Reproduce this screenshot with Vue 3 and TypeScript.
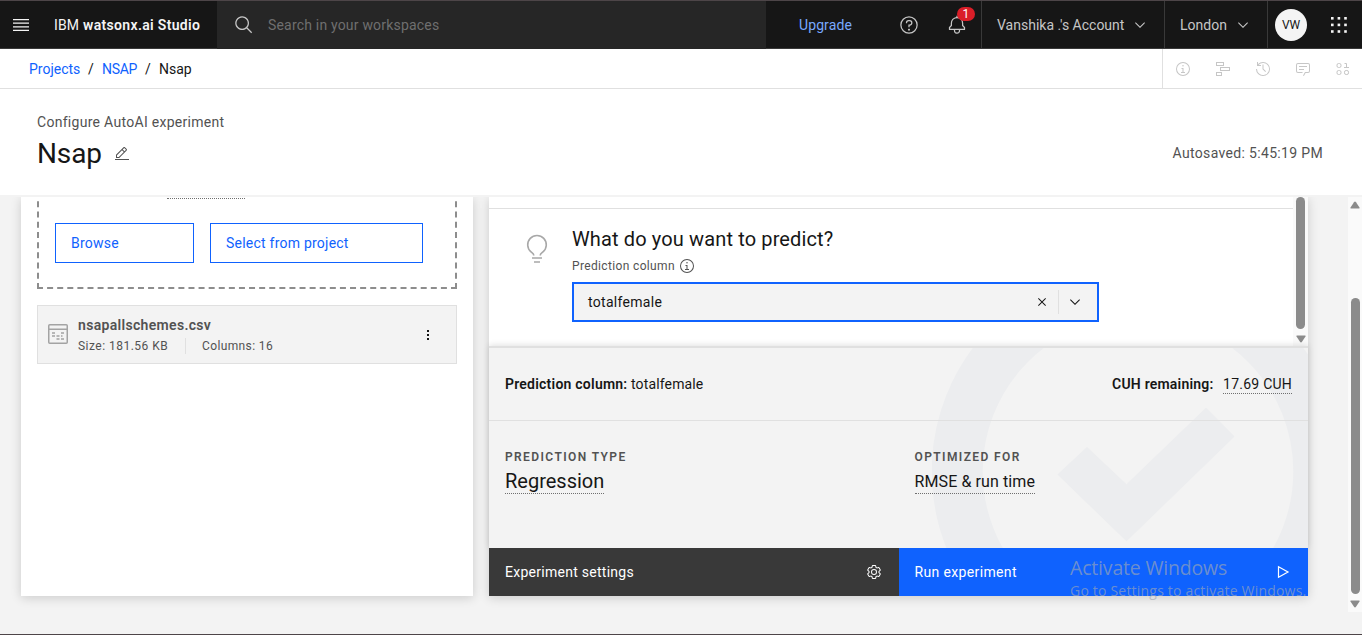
<script setup lang="ts">
import { ref } from 'vue'

const icons = {
  menu: 'M2 14.8H18V16H2z M2 11.2H18V12.4H2z M2 7.6H18V8.8H2z M2 4H18V5.2H2z',
  search:
    'M29,27.5859l-7.5521-7.5521a11.0177,11.0177,0,1,0-1.4141,1.4141L27.5859,29ZM4,13a9,9,0,1,1,9,9A9.01,9.01,0,0,1,4,13Z',
  help: 'M16,2A14,14,0,1,0,30,16,14,14,0,0,0,16,2Zm0,26A12,12,0,1,1,28,16,12,12,0,0,1,16,28Z M16 22a1.5 1.5 0 1 0 .01 0Z M17,8H15.5A4.49,4.49,0,0,0,11,12.5V13h2v-.5A2.5,2.5,0,0,1,15.5,10H17a2.5,2.5,0,0,1,0,5H15v4.5h2V17a4.5,4.5,0,0,0,0-9Z',
  bell: 'M28.7071,19.293,26,16.5859V13a10.0136,10.0136,0,0,0-9-9.9492V1H15V3.0508A10.0136,10.0136,0,0,0,6,13v3.5859L3.2929,19.293A1,1,0,0,0,3,20v3a1,1,0,0,0,1,1h7v.7768a5.152,5.152,0,0,0,4.5,5.1987A5.0057,5.0057,0,0,0,21,25V24h7a1,1,0,0,0,1-1V20A1,1,0,0,0,28.7071,19.293ZM19,25a3,3,0,0,1-6,0V24h6Zm8-3H5V20.4141L7.707,17.707A1,1,0,0,0,8,17V13a8,8,0,0,1,16,0v4a1,1,0,0,0,.293.707L27,20.4141Z',
  chevron: 'M8 11L3 6 3.7 5.3 8 9.6 12.3 5.3 13 6z',
  info: 'M17 22L17 14 13 14 13 16 15 16 15 22 12 22 12 24 20 24 20 22 17 22z M16 8a1.5 1.5 0 1 0 1.5 1.5A1.5 1.5 0 0 0 16 8z M16,30A14,14,0,1,1,30,16,14,14,0,0,1,16,30ZM16,4A12,12,0,1,0,28,16,12,12,0,0,0,16,4Z',
  history:
    'M20.59 22L15 16.41 15 7 17 7 17 15.58 22 20.59 20.59 22z M16,2A13.94,13.94,0,0,0,6,6.23V2H4v8h8V8H7.08A12,12,0,1,1,4,16H2A14,14,0,1,0,16,2Z',
  chat: 'M17.74,30,16,29l4-7h6a2,2,0,0,0,2-2V8a2,2,0,0,0-2-2H6A2,2,0,0,0,4,8V20a2,2,0,0,0,2,2h9v2H6a4,4,0,0,1-4-4V8A4,4,0,0,1,6,4H26a4,4,0,0,1,4,4V20a4,4,0,0,1-4,4H21.16Z M8 10H24V12H8z M8 16H18V18H8z',
  edit: 'M2 26H30V28H2z M25.4,9c0.8-0.8,0.8-2,0-2.8l-3.6-3.6c-0.8-0.8-2-0.8-2.8,0l-15,15V24h6.4L25.4,9zM20.4,4L24,7.6l-3,3L17.4,7L20.4,4z M6,22v-3.6l10-10l3.6,3.6l-10,10H6z',
  close:
    'M24 9.4L22.6 8 16 14.6 9.4 8 8 9.4 14.6 16 8 22.6 9.4 24 16 17.4 22.6 24 24 22.6 17.4 16 24 9.4z',
  settings:
    'M27,16.76c0-.25,0-.5,0-.76s0-.51,0-.77l1.92-1.68A2,2,0,0,0,29.3,11L26.94,7a2,2,0,0,0-1.73-1,2,2,0,0,0-.64.1l-2.43.82a11.35,11.35,0,0,0-1.31-.75l-.51-2.52a2,2,0,0,0-2-1.61H13.64a2,2,0,0,0-2,1.61l-.51,2.52a11.48,11.48,0,0,0-1.32.75L7.43,6.06A2,2,0,0,0,6.79,6,2,2,0,0,0,5.06,7L2.7,11a2,2,0,0,0,.41,2.51L5,15.24c0,.25,0,.5,0,.76s0,.51,0,.77L3.11,18.45A2,2,0,0,0,2.7,21L5.06,25a2,2,0,0,0,1.73,1,2,2,0,0,0,.64-.1l2.43-.82a11.35,11.35,0,0,0,1.31.75l.51,2.52a2,2,0,0,0,2,1.61h4.72a2,2,0,0,0,2-1.61l.51-2.52a11.48,11.48,0,0,0,1.32-.75l2.42.82a2,2,0,0,0,.64.1,2,2,0,0,0,1.73-1L29.3,21a2,2,0,0,0-.41-2.51ZM25.21,24l-3.43-1.16a8.86,8.86,0,0,1-2.71,1.57L18.36,28H13.64l-.71-3.55a9.36,9.36,0,0,1-2.7-1.57L6.79,24,4.43,20l2.72-2.4a8.9,8.9,0,0,1,0-3.13L4.43,12,6.79,8l3.43,1.16a8.86,8.86,0,0,1,2.71-1.57L13.64,4h4.72l.71,3.55a9.36,9.36,0,0,1,2.7,1.57L25.21,8,27.57,12l-2.72,2.4a8.9,8.9,0,0,1,0,3.13L27.57,20Z M16,22a6,6,0,1,1,6-6A5.94,5.94,0,0,1,16,22Zm0-10a3.91,3.91,0,0,0-4,4,3.91,3.91,0,0,0,4,4,3.91,3.91,0,0,0,4-4A3.91,3.91,0,0,0,16,12Z',
}

const switcherOffsets: number[] = [2, 8.6, 15.2]
const predictionColumn = ref<string>('totalfemale')
</script>

<template>
  <div class="page">
    <header class="topbar">
      <button class="menu" aria-label="Menu">
        <svg width="20" height="20" viewBox="0 0 20 20"><path :d="icons.menu" /></svg>
      </button>
      <div class="brand"><span class="ibm">IBM</span> <b>watsonx.ai Studio</b></div>
      <div class="search">
        <svg width="20" height="20" viewBox="0 0 32 32"><path :d="icons.search" /></svg>
        <span>Search in your workspaces</span>
      </div>
      <a class="upgrade">Upgrade</a>
      <div class="action help">
        <svg width="20" height="20" viewBox="0 0 32 32"><path :d="icons.help" /></svg>
      </div>
      <div class="action alerts">
        <svg width="20" height="20" viewBox="0 0 32 32"><path :d="icons.bell" /></svg>
        <span class="badge">1</span>
      </div>
      <div class="select account">
        <span>Vanshika .'s Account</span>
        <svg width="16" height="16" viewBox="0 0 16 16"><path :d="icons.chevron" /></svg>
      </div>
      <div class="select region">
        <span>London</span>
        <svg width="16" height="16" viewBox="0 0 16 16"><path :d="icons.chevron" /></svg>
      </div>
      <div class="user"><span class="avatar">VW</span></div>
      <div class="switcher">
        <svg width="20" height="20" viewBox="0 0 20 20">
          <template v-for="y in switcherOffsets" :key="y">
            <rect v-for="x in switcherOffsets" :key="x" :x="x" :y="y" width="2.6" height="2.6" />
          </template>
        </svg>
      </div>
    </header>

    <nav class="crumbs">
      <div class="trail">
        <a class="c-projects">Projects</a><i>/</i><a class="c-space">NSAP</a><i>/</i><span>Nsap</span>
      </div>
      <div class="tools">
        <svg width="16" height="16" viewBox="0 0 32 32"><path :d="icons.info" /></svg>
        <svg class="line" width="16" height="16" viewBox="0 0 16 16">
          <rect x="1.5" y="1.5" width="7" height="3" />
          <rect x="5.5" y="6.5" width="9" height="3" />
          <rect x="1.5" y="11.5" width="5" height="3" />
        </svg>
        <svg width="16" height="16" viewBox="0 0 32 32"><path :d="icons.history" /></svg>
        <svg width="16" height="16" viewBox="0 0 32 32"><path :d="icons.chat" /></svg>
        <svg class="line" width="16" height="16" viewBox="0 0 16 16">
          <rect x="2" y="2.5" width="4" height="4" rx="1.6" />
          <rect x="2" y="9.5" width="4" height="4" rx="1.6" />
          <rect x="9.5" y="9.5" width="4" height="4" rx="1.6" />
          <path d="M9.5 2.5H11.5V6.5M9 6.5H14" />
        </svg>
      </div>
    </nav>

    <section class="heading">
      <div>
        <p>Configure AutoAI experiment</p>
        <h1>
          <span>Nsap</span>
          <svg width="16" height="16" viewBox="0 0 32 32"><path :d="icons.edit" /></svg>
        </h1>
      </div>
      <span class="autosaved">Autosaved: 5:45:19 PM</span>
    </section>

    <main class="body">
      <section class="panel sources">
        <div class="upload">
          <div class="hint"></div>
          <div class="upload-actions">
            <button class="browse">Browse</button>
            <button class="project">Select from project</button>
          </div>
        </div>
        <div class="file">
          <svg class="table" width="20" height="20" viewBox="0 0 20 20">
            <rect x=".75" y=".75" width="18.5" height="18.5" rx="1" />
            <path d="M1 5.3H19M4 9H7M13 9H16M4 12H7M8.5 12H11.5M13 12H14.5M8.5 15H11.5M13 15H16" />
          </svg>
          <div class="file-info">
            <b>nsapallschemes.csv</b>
            <div class="meta"><span class="size">Size: 181.56 KB</span><span class="cols">Columns: 16</span></div>
          </div>
          <svg class="dots" width="16" height="16" viewBox="0 0 16 16">
            <rect x="7" y="3" width="2" height="2" />
            <rect x="7" y="7" width="2" height="2" />
            <rect x="7" y="11" width="2" height="2" />
          </svg>
        </div>
      </section>

      <section class="panel config">
        <div class="question">
          <div class="question-main">
            <svg class="bulb" width="32" height="32" viewBox="0 0 32 32">
              <path d="M12.7 22.6V22C12.7 20.8 11.2 20 10 18.9A9.3 9.3 0 1 1 22 18.9C20.8 20 19.3 20.8 19.3 22V22.6" />
              <path d="M11 25H21M13 29H19" />
            </svg>
            <div class="field">
              <h2>What do you want to predict?</h2>
              <label>
                <span>Prediction column</span>
                <svg width="16" height="16" viewBox="0 0 32 32"><path :d="icons.info" /></svg>
              </label>
              <div class="combo">
                <span>{{ predictionColumn }}</span>
                <svg class="clear" width="16" height="16" viewBox="0 0 32 32"><path :d="icons.close" /></svg>
                <div class="open">
                  <svg width="16" height="16" viewBox="0 0 16 16"><path :d="icons.chevron" /></svg>
                </div>
              </div>
            </div>
          </div>
          <div class="scroll inner">
            <div class="thumb"></div>
            <svg width="10" height="8" viewBox="0 0 10 8"><path d="M1 .5H9Q10 .5 9.5 1.6L6 6.8Q5 8 4 6.8L.5 1.6Q0 .5 1 .5Z" /></svg>
          </div>
        </div>

        <div class="summary">
          <svg class="watermark" width="376" height="200" viewBox="932 348 376 200">
            <circle cx="1138" cy="471.5" r="180.8" />
            <path d="M1206 407.7L1234.5 436.5L1126.5 541.3L1057.5 474.5L1087 447L1126.5 484.3Z" />
          </svg>
          <div class="row totals">
            <div><b class="pc">Prediction column:</b><span class="pv">{{ predictionColumn }}</span></div>
            <div><b class="cuh">CUH remaining:</b><span class="term cuh-value">17.69 CUH</span></div>
          </div>
          <div class="row results">
            <div class="result">
              <h3>PREDICTION TYPE</h3>
              <span class="term type">Regression</span>
            </div>
            <div class="result">
              <h3>OPTIMIZED FOR</h3>
              <span class="term metric">RMSE &amp; run time</span>
            </div>
          </div>
        </div>

        <footer class="buttons">
          <button class="settings">
            <span>Experiment settings</span>
            <svg width="16" height="16" viewBox="0 0 32 32"><path :d="icons.settings" /></svg>
          </button>
          <button class="run">
            <span>Run experiment</span>
            <svg width="16" height="16" viewBox="0 0 16 16"><path d="M3.5 2.7L13 8L3.5 13.3Z" /></svg>
          </button>
        </footer>
      </section>

      <div class="scroll outer">
        <svg width="10" height="8" viewBox="0 0 10 8"><path d="M1 7.5H9Q10 7.5 9.5 6.4L6 1.2Q5 0 4 1.2L.5 6.4Q0 7.5 1 7.5Z" /></svg>
        <div class="thumb"></div>
        <svg width="10" height="8" viewBox="0 0 10 8"><path d="M1 .5H9Q10 .5 9.5 1.6L6 6.8Q5 8 4 6.8L.5 1.6Q0 .5 1 .5Z" /></svg>
      </div>
    </main>

    <div class="activation">
      <div class="a1">Activate Windows</div>
      <div class="a2">Go to Settings to activate Windows.</div>
    </div>
  </div>
</template>

<style>
html,
body {
  margin: 0;
  overflow: hidden;
}
</style>

<style scoped>
* {
  box-sizing: border-box;
}
.page {
  position: relative;
  display: flex;
  flex-direction: column;
  width: 1362px;
  height: 635px;
  overflow: hidden;
  border-top: 1px solid #4d4548;
  border-bottom: 1px solid #4d4548;
  background: #f3f3f3;
  color: #161616;
  font: 400 14px/18px Roboto, 'Liberation Sans', sans-serif;
  letter-spacing: 0.23px;
  white-space: nowrap;
}
svg {
  display: block;
  flex: none;
  fill: currentColor;
}
button {
  margin: 0;
  padding: 0;
  border: 0;
  background: none;
  font: inherit;
  letter-spacing: inherit;
  color: inherit;
  text-align: left;
}
h1,
h2,
h3,
p {
  margin: 0;
  font-weight: 400;
}
b {
  font-weight: 600;
}

/* top bar */
.topbar {
  display: flex;
  flex: none;
  height: 48px;
  background: #161616;
  color: #c6c6c6;
  border-bottom: 1px solid #393939;
}
.topbar > * {
  display: flex;
  align-items: center;
}
.menu {
  width: 54px;
  padding-left: 11px;
  color: #f4f4f4;
}
.brand {
  width: 163px;
  color: #f4f4f4;
  gap: 4px;
  letter-spacing: 0.1px;
}
.brand b {
  letter-spacing: 0.32px;
}
.search {
  width: 549px;
  height: 48px;
  padding: 0 0 1px 17px;
  background: #262626;
  gap: 14px;
}
.search span {
  color: #6f6f6f;
  letter-spacing: 0.19px;
}
.upgrade {
  width: 133px;
  padding-left: 33px;
  color: #78a9ff;
  letter-spacing: 0.1px;
}
.action {
  position: relative;
  width: 48px;
}
.alerts {
  width: 34px;
}
.badge {
  position: absolute;
  left: 10px;
  top: 6px;
  width: 18px;
  height: 14px;
  border-radius: 7px;
  background: #da1e28;
  color: #fff;
  font-size: 12px;
  line-height: 14px;
  text-align: center;
}
.select {
  justify-content: space-between;
  border-left: 1px solid #393939;
  letter-spacing: 0;
}
.account {
  width: 183px;
  padding: 0 16px 0 15px;
}
.region {
  width: 103px;
  padding: 0 16px 0 15px;
}
.user {
  width: 60px;
  padding-left: 7px;
  border-left: 1px solid #393939;
}
.avatar {
  width: 32px;
  height: 32px;
  border-radius: 50%;
  background: #f4f4f4;
  color: #161616;
  font-size: 12px;
  line-height: 32px;
  letter-spacing: -0.1px;
  text-align: center;
}
.switcher {
  padding-left: 2px;
  color: #f4f4f4;
}

/* breadcrumbs */
.crumbs {
  display: flex;
  flex: none;
  justify-content: space-between;
  height: 40px;
  border-bottom: 1px solid #e0e0e0;
  background: #fff;
}
.trail {
  display: flex;
  align-items: center;
  padding: 1px 0 0 29px;
  letter-spacing: 0;
}
.trail a {
  color: #0f62fe;
}
.c-projects {
  width: 51px;
}
.c-space {
  width: 35px;
  letter-spacing: -0.3px;
}
.trail i {
  width: 22px;
  font-style: normal;
  text-align: center;
}
.tools {
  display: flex;
  align-items: center;
  gap: 24px;
  width: 200px;
  padding: 1px 0 0 12px;
  border-left: 1px solid #e0e0e0;
  color: #c6c6c6;
}
.line {
  fill: none;
  stroke: currentColor;
}

/* heading */
.heading {
  display: flex;
  flex: none;
  justify-content: space-between;
  height: 106px;
  padding: 24px 39px 0 37px;
  background: #fff;
}
.heading p {
  color: #525252;
  letter-spacing: 0.29px;
}
.heading h1 {
  display: flex;
  align-items: center;
  gap: 12px;
  height: 36px;
  margin-top: 5px;
  font-size: 28px;
  line-height: 36px;
  letter-spacing: -0.1px;
}
.heading h1 svg {
  margin-bottom: 1px;
  color: #525252;
}
.autosaved {
  margin-top: 31px;
  color: #525252;
  letter-spacing: 0.33px;
}

/* body */
.body {
  display: flex;
  flex: none;
  gap: 16px;
  height: 438px;
  margin-top: 2px;
  padding-left: 21px;
  overflow: hidden;
}
.panel {
  height: 399px;
  box-shadow: 0 2px 10px rgba(0, 0, 0, 0.16);
}
.sources {
  width: 452px;
  padding: 0 16px;
  background: #fff;
}
.upload {
  display: flex;
  flex-direction: column;
  justify-content: flex-end;
  height: 200px;
  margin-top: -108px;
  padding: 0 16px 24px;
  border: 2px dashed #8d8d8d;
}
.hint {
  width: 78px;
  margin: 0 0 24px 112px;
  border-bottom: 1px dotted #6f6f6f;
}
.upload-actions {
  display: flex;
  gap: 16px;
}
.upload-actions button {
  height: 40px;
  padding-left: 15px;
  border: 1px solid #0f62fe;
  color: #0f62fe;
}
.browse {
  width: 139px;
}
.project {
  width: 213px;
}
.file {
  display: flex;
  height: 59px;
  margin-top: 16px;
  padding: 0 20px 0 10px;
  border: 1px solid #e0e0e0;
  background: #f3f3f3;
  color: #525252;
}
.table {
  margin-top: 18px;
  fill: none;
  stroke: #a3a3a3;
  stroke-width: 1.5;
}
.file-info {
  flex: 1;
  padding: 10px 0 0 10px;
}
.file-info b {
  display: block;
  letter-spacing: 0.32px;
}
.meta {
  display: flex;
  align-items: center;
  height: 16px;
  margin-top: 4px;
  font-size: 12px;
  line-height: 16px;
  letter-spacing: 0.38px;
}
.size {
  width: 108px;
  border-right: 1px solid #e0e0e0;
  letter-spacing: 0.48px;
}
.cols {
  padding-left: 16px;
}
.dots {
  align-self: center;
  color: #161616;
}

.config {
  width: 819px;
}
.question {
  display: flex;
  height: 149px;
  background: #fff;
}
.question-main {
  display: flex;
  flex: none;
  width: 804px;
  height: 138px;
  margin-top: 11px;
  padding-left: 32px;
  border-top: 1px solid #e0e0e0;
}
.bulb {
  margin-top: 24px;
  fill: none;
  stroke: #a8a8a8;
  stroke-width: 1.6;
}
.field {
  margin-left: 19px;
}
.field h2 {
  height: 28px;
  margin-top: 16px;
  font-size: 20px;
  line-height: 28px;
  letter-spacing: 0.13px;
}
.field label {
  display: flex;
  align-items: center;
  gap: 4px;
  height: 16px;
  margin: 5px 0 8px;
  color: #525252;
  font-size: 12px;
  line-height: 16px;
  letter-spacing: 0.35px;
}
.combo {
  display: flex;
  align-items: center;
  width: 527px;
  height: 40px;
  padding-left: 14px;
  border: 2px solid #0f62fe;
  background: #f3f3f3;
}
.combo span {
  flex: 1;
  letter-spacing: 0.3px;
}
.clear {
  margin-right: 8px;
}
.open {
  width: 39px;
  padding: 4px 0 4px 8px;
  border-left: 1px solid #e0e0e0;
}
.scroll {
  display: flex;
  flex-direction: column;
  align-items: center;
  background: #fafafa;
  color: #8b8b8b;
}
.thumb {
  width: 9px;
  border-radius: 5px;
  background: #8b8b8b;
}
.inner {
  width: 15px;
  gap: 6px;
}
.inner .thumb {
  height: 132px;
}

.summary {
  position: relative;
  height: 202px;
  border-top: 2px solid #e0e0e0;
  background: #f3f3f3;
  box-shadow: 0 -1px 6px rgba(0, 0, 0, 0.12);
}
.watermark {
  position: absolute;
  right: 0;
  top: 0;
}
.watermark circle {
  fill: none;
  stroke: #ecedef;
  stroke-width: 51;
}
.watermark path {
  fill: #ecedef;
}
.row {
  position: relative;
  display: flex;
}
.totals {
  justify-content: space-between;
  height: 73px;
  padding: 27px 16px 0;
  border-bottom: 1px solid #e0e0e0;
}
.totals b,
.totals span {
  display: inline-block;
}
.pc {
  width: 126px;
}
.pv {
  letter-spacing: 0.14px;
}
.cuh {
  width: 111px;
  letter-spacing: 0.2px;
}
.term {
  display: inline-block;
  border-bottom: 1px dotted #6f6f6f;
}
.result {
  width: 409.5px;
  padding: 28px 0 0 16px;
}
.result h3 {
  height: 16px;
  color: #525252;
  font-size: 12px;
  font-weight: 600;
  line-height: 16px;
  letter-spacing: 1.4px;
}
.type,
.metric {
  height: 29px;
  font-size: 20px;
  line-height: 32px;
  letter-spacing: 0;
}
.metric {
  font-size: 16px;
  line-height: 34px;
  letter-spacing: 0.1px;
}

.buttons {
  position: relative;
  display: flex;
  height: 48px;
  color: #fff;
}
.buttons button {
  display: flex;
  flex: 1;
  align-items: center;
  justify-content: space-between;
  padding: 0 17px 0 16px;
  letter-spacing: 0.27px;
}
.settings {
  background: #393939;
}
.run {
  background: #0f62fe;
}
.run span {
  letter-spacing: 0.36px;
}
.run svg {
  fill: none;
  stroke: currentColor;
  stroke-width: 1.2;
}

.outer {
  width: 14px;
  height: 415px;
  margin-left: 24px;
  padding-top: 4px;
}
.outer .thumb {
  height: 296px;
  margin: 89px 0 6px;
}

/* desktop activation notice floating over the window */
.activation {
  position: absolute;
  left: 1070px;
  top: 553px;
  color: rgba(160, 168, 178, 0.65);
  font-family: 'Open Sans', 'Noto Sans', sans-serif;
  letter-spacing: 0;
}
.a1 {
  font-size: 19.5px;
  line-height: 28px;
  letter-spacing: -0.18px;
}
.a2 {
  font-size: 14px;
  line-height: 18px;
  letter-spacing: 0.2px;
}
</style>
